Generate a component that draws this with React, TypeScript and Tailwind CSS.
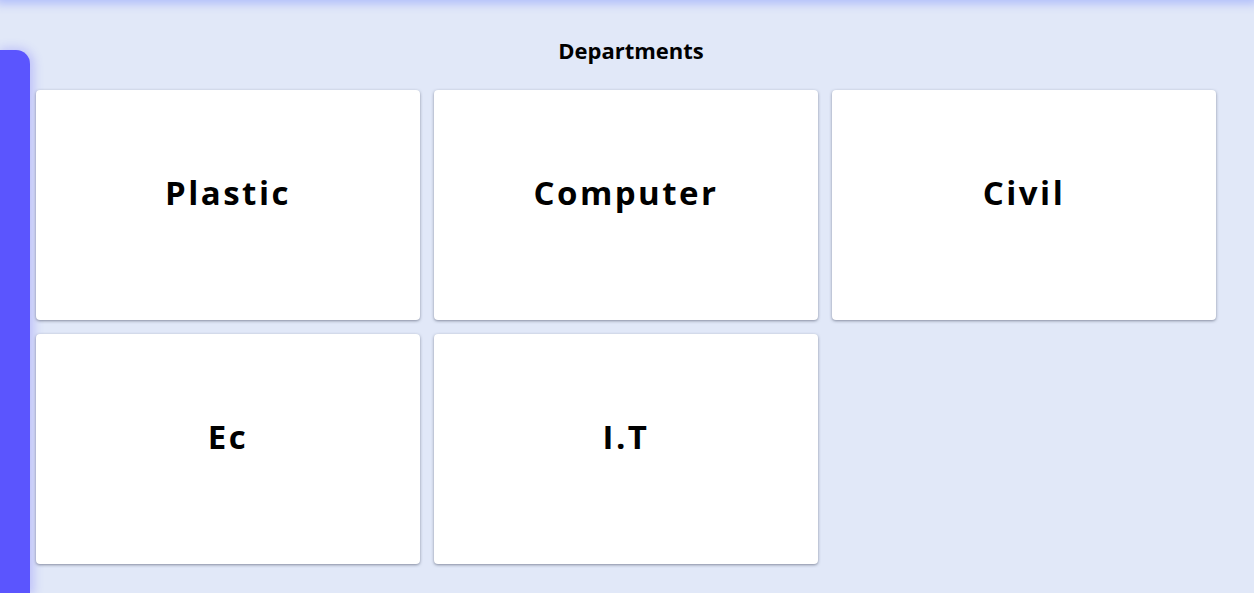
import React from "react";

const depts = ["Plastic", "Computer", "Civil", "Ec", "I.T"];

export default function App() {
  return (
    <div
      className="relative w-[1254px] h-[593px] overflow-hidden bg-[#e1e8f8]"
      style={{ fontFamily: '"Open Sans", "Noto Sans", sans-serif' }}
    >
      <div className="absolute left-0 right-0 top-[-20px] h-[20px] bg-[#e1e8f8] shadow-[0_0_10px_4px_rgba(120,140,255,0.45)]" />
      <div className="flex h-full pt-[50px]">
        <div className="w-[30px] shrink-0 rounded-tr-[14px] bg-[#5b55fe] shadow-[2px_0_10px_2px_rgba(91,85,254,0.25)]" />
        <div className="flex-1 flex flex-col">
          <h2 className="mt-[-14px] h-[28px] pr-[22px] text-center text-[22px] font-bold text-black leading-[28px]">
            Departments
          </h2>
          <div className="mt-[26px] ml-[6px] grid grid-cols-[384px_384px_384px] gap-[14px]">
            {depts.map((d) => (
              <div
                key={d}
                className="h-[230px] rounded-[4px] bg-white shadow-[0_1px_3px_rgba(40,45,70,0.5)] flex justify-center pt-[80px]"
              >
                <span className="text-[33px] font-bold tracking-[0.075em] text-black leading-[46px]">
                  {d}
                </span>
              </div>
            ))}
          </div>
        </div>
      </div>
    </div>
  );
}
